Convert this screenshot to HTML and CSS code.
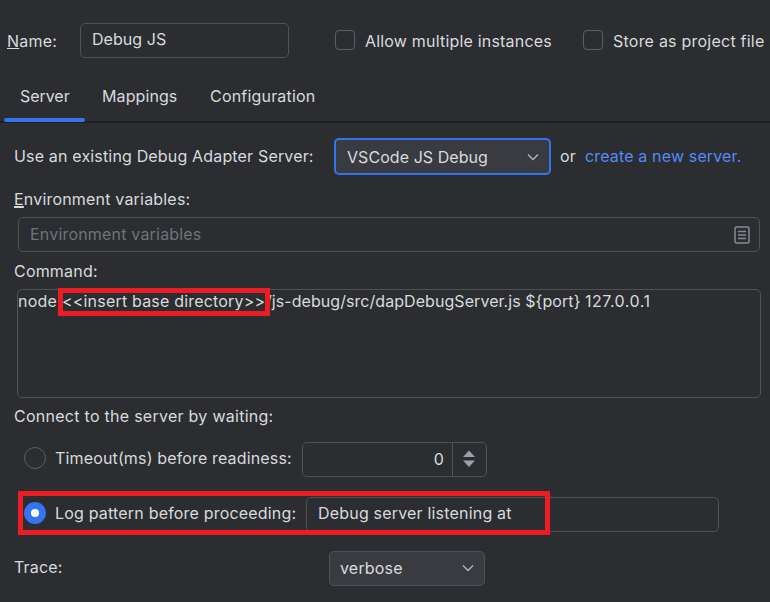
FILE: index.html
```html
<!DOCTYPE html>
<html lang="en">
<head>
<meta charset="utf-8">
<title>Debug JS</title>
<link rel="stylesheet" href="styles.css">
</head>
<body>
<main class="dialog">
  <header class="head">
    <label class="name-label"><span class="mnemonic">N</span>ame:</label>
    <div class="field name-field"><span class="t-debug">Debug JS</span></div>
    <span class="checkbox"></span><span class="allow">Allow multiple instances</span>
    <span class="checkbox store-box"></span><span class="store">Store as project file</span>
  </header>
  <nav class="tabs">
    <span class="tab active">Server</span>
    <span class="tab mappings">Mappings</span>
    <span class="tab config">Configuration</span>
  </nav>
  <section class="row server-row">
    <span class="server-label">Use an existing Debug Adapter Server:</span>
    <div class="select focused"><span>VSCode JS Debug</span>
      <svg class="chevron" width="12" height="8" viewBox="0 0 12 8"><path d="M1 1.5 6 6.5 11 1.5"/></svg>
    </div>
    <span class="or">or</span>
    <a class="link">create a new server.</a>
  </section>
  <div class="row env-label"><span><span class="mnemonic">E</span>nvironment variables:</span></div>
  <div class="field env-field">
    <span class="placeholder">Environment variables</span>
    <svg class="list-icon" width="16" height="18" viewBox="0 0 16 18"><rect x="1" y="1" width="14" height="16" rx="1.5"/><path d="M4 5.5h8M4 9h8M4 12.5h8"/></svg>
  </div>
  <div class="row command-label"><span>Command:</span></div>
  <div class="textarea"><span class="node">node</span><span class="mark"><span class="insert">&lt;&lt;insert base directory&gt;&gt;</span></span><span class="path">/js-debug/src/dapDebugServer.js ${port} <span class="ip">127.0.0.1</span></span></div>
  <div class="row connect-label"><span>Connect to the server by waiting:</span></div>
  <section class="row timeout-row">
    <span class="radio"></span><span class="timeout-label">Timeout(ms) before readiness:</span>
    <div class="spinner"><span class="value">0</span>
      <span class="steps"><svg width="12" height="18" viewBox="0 0 12 18"><path d="M0 7 6 .5 12 7ZM0 10.5h12L6 17Z"/></svg></span>
    </div>
  </section>
  <section class="row log-row">
    <span class="radio checked"></span><span class="log-label">Log pattern before proceeding:</span>
    <div class="field log-field"><span>Debug server listening at</span></div>
    <span class="log-mark"></span>
  </section>
  <section class="row trace-row">
    <span class="trace-label">Trace:</span>
    <div class="select verbose"><span>verbose</span>
      <svg class="chevron" width="12" height="8" viewBox="0 0 12 8"><path d="M1 1.5 6 6.5 11 1.5"/></svg>
    </div>
  </section>
</main>
</body>
</html>
```
FILE: styles.css
```css
* { box-sizing: border-box; }
body {
  margin: 0;
  background: #2b2d30;
  color: #d8dade;
  font: 16px/20px Inter, sans-serif;
  letter-spacing: 0.19px;
  white-space: nowrap;
}
.dialog { width: 770px; height: 602px; overflow: hidden; }
.head { display: flex; align-items: center; height: 82px; padding-left: 7px; }
.mnemonic { text-decoration: underline; text-decoration-thickness: 1px; text-underline-offset: 1px; }
.name-label { width: 73px; }
.field { display: flex; align-items: center; border: 1px solid #4e5157; border-radius: 5px; height: 35px; }
.name-field { width: 209px; padding: 0 11px 3px; margin-bottom: 2px; letter-spacing: 0.05px; }
.checkbox { width: 20px; height: 20px; margin: 0 10px 2px 46px; border: 1px solid #5a5d63; border-radius: 4px; }
.allow { width: 187px; }
.store-box { margin-left: 31px; }
.store { letter-spacing: 0.23px; }
.tabs { display: flex; height: 41px; padding-left: 4px; border-bottom: 2px solid #1e1f22; }
.tab { height: 41px; padding: 4px 16px 0; flex: none; }
.active { position: relative; width: 81px; letter-spacing: -0.05px; }
.active::after { content: ""; position: absolute; left: 0; bottom: 1px; width: 81px; height: 4px; border-radius: 2px; background: #3574f0; }
.mappings { width: 109px; padding-left: 17px; letter-spacing: 0.1px; }
.row { display: flex; align-items: center; padding-left: 14px; }
.server-row { height: 66px; padding-top: 1px; }
.server-label { width: 320px; padding-bottom: 2px; letter-spacing: 0.165px; }
.select { display: flex; align-items: center; justify-content: space-between; background: #393b40; border: 1px solid #4e5157; border-radius: 5px; }
.focused { width: 217px; height: 37px; border: 2px solid #3574f0; padding: 0 10px 0 11px; letter-spacing: 0.06px; }
.chevron { fill: none; stroke: #b4b8bf; stroke-width: 1.3; }
.or { width: 25px; margin-left: 9px; padding-bottom: 2px; }
.link { color: #548af7; padding-bottom: 2px; letter-spacing: 0.15px; }
.env-label { height: 27px; padding-bottom: 8px; }
.env-label .mnemonic { text-decoration-thickness: 2px; }
.env-field { margin: 1px 10px 0 18px; padding: 0 9px 0 11px; justify-content: space-between; }
.placeholder { color: #6f737a; padding-bottom: 2px; }
.list-icon { fill: none; stroke: #868a91; stroke-width: 1.5; }
.command-label { height: 37px; padding-top: 1px; }
.textarea { display: flex; align-items: flex-start; height: 109px; margin: 0 9px 0 17px; border: 1px solid #4e5157; border-radius: 5px; }
.node { width: 40px; padding-top: 1px; }
.mark { position: relative; z-index: 1; width: 212px; height: 28px; margin-top: -2px; border: 5px solid #ed1c24; flex: none; }
.insert { display: block; margin: -2px 0 0 -1px; }
.path { padding-top: 1px; margin-left: -4px; letter-spacing: 0.06px; }
.ip { letter-spacing: 0.5px; }
.connect-label { height: 36px; letter-spacing: 0.27px; }
.timeout-row { height: 50px; }
.radio { width: 22px; height: 22px; margin: 0 9px 2px 10px; border: 1px solid #5a5d63; border-radius: 50%; }
.timeout-label, .log-label { width: 247px; padding-bottom: 2px; }
.timeout-label { letter-spacing: 0.15px; }
.spinner { display: flex; width: 185px; height: 35px; border: 1px solid #4e5157; border-radius: 5px; }
.value { width: 150px; border-right: 1px solid #4e5157; padding: 6px 8px 0 0; text-align: right; }
.steps { width: 33px; display: grid; place-items: center; padding-right: 2px; fill: #9da0a8; }
.log-row { position: relative; height: 60px; }
.checked { border: 7px solid #3574f0; background: #fff; }
.log-label { width: 251px; }
.log-field { width: 413px; padding: 0 11px 2px; }
.log-mark { position: absolute; left: 18px; top: 7px; width: 532px; height: 44px; border: 5px solid #ed1c24; }
.trace-row { height: 48px; }
.trace-label { width: 315px; padding-bottom: 2px; }
.verbose { width: 156px; height: 35px; padding: 0 10px; }
```
